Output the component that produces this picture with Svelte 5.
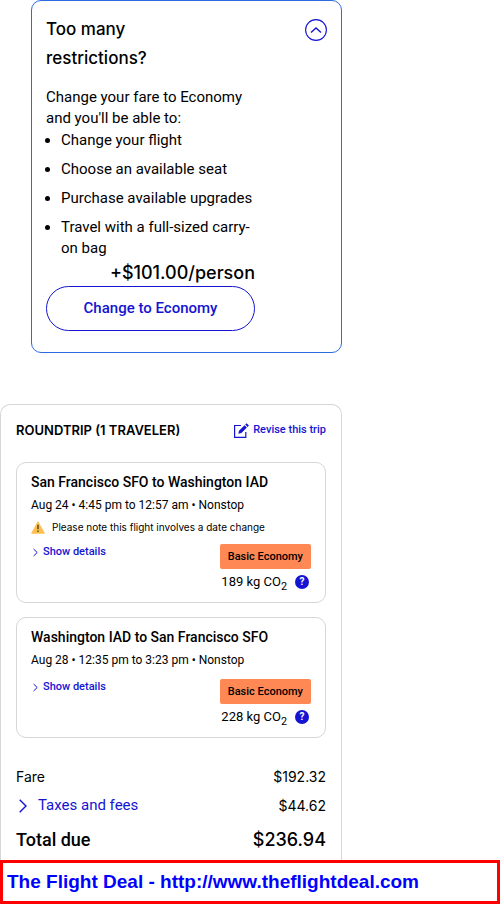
<script>
  const benefits = [
    'Change your flight',
    'Choose an available seat',
    'Purchase available upgrades',
    'Travel with a full-sized carry-on bag'
  ];
  const flights = [
    {
      route: 'San Francisco SFO to Washington IAD',
      times: 'Aug 24 • 4:45 pm to 12:57 am • Nonstop',
      note: 'Please note this flight involves a date change',
      co2: '189 kg CO'
    },
    {
      route: 'Washington IAD to San Francisco SFO',
      times: 'Aug 28 • 12:35 pm to 3:23 pm • Nonstop',
      note: '',
      co2: '228 kg CO'
    }
  ];
</script>

<main>
  <div class="column">
    <section class="upsell">
      <header>
        <h2>Too many restrictions?</h2>
        <button class="collapse" aria-label="Collapse">
          <svg width="22" height="22" viewBox="0 0 22 22" fill="none" stroke="#1414d2">
            <circle cx="11" cy="11" r="10.4" stroke-width="1.1" />
            <path d="M6 13.5 11 9l5 4.5" stroke-width="1.4" />
          </svg>
        </button>
      </header>
      <div class="offer">
        <p>Change your fare to Economy and you'll be able to:</p>
        <ul>
          {#each benefits as benefit}
            <li>{benefit}</li>
          {/each}
        </ul>
        <div class="price">+$101.00/person</div>
        <button class="change">Change to Economy</button>
      </div>
    </section>

    <section class="trip">
      <header>
        <h3>ROUNDTRIP (1 TRAVELER)</h3>
        <a class="revise" href="#revise">
          <svg width="15" height="15" viewBox="0 0 15 15">
            <path d="M7 2.5H.6v11.9h11.2V9" fill="none" stroke="#1414d2" stroke-width="1.2" />
            <path d="M4.3 10.8l.7-3.1 5.5-5.5 2.4 2.4-5.5 5.5zM11.2 1.5 12.6.2l2.3 2.3-1.3 1.4z" fill="#1414d2" />
          </svg>
          Revise this trip
        </a>
      </header>

      {#each flights as flight}
        <article>
          <h4>{flight.route}</h4>
          <div class="times">{flight.times}</div>
          {#if flight.note}
            <div class="note">
              <svg width="14" height="13" viewBox="0 0 14 13">
                <path d="M7 .8 13.3 12.2H.7z" fill="#fdc050" stroke="#fdc050" stroke-linejoin="round" />
                <path d="M7 3.8v4.4M7 9.4v1.5" stroke="#5f4a25" stroke-width="1.5" />
              </svg>
              {flight.note}
            </div>
          {/if}
          <div class="lower" class:spaced={!flight.note}>
            <a class="details" href="#details">
              <svg width="5" height="9" viewBox="0 0 5 9" fill="none" stroke="#1414d2">
                <path d="M.6 1 4.2 4.5.6 8" />
              </svg>
              Show details
            </a>
            <div class="cabin">
              <span class="tag">Basic Economy</span>
              <div class="co2">
                <span>{flight.co2}<sub>2</sub></span>
                <button class="help" aria-label="About emissions">?</button>
              </div>
            </div>
          </div>
        </article>
      {/each}

      <dl>
        <div class="row">
          <dt>Fare</dt>
          <dd>$192.32</dd>
        </div>
        <div class="row">
          <dt>
            <a class="taxes" href="#taxes">
              <svg width="8" height="14" viewBox="0 0 8 14" fill="none" stroke="#1414d2">
                <path d="M.7.7 7 7 .7 13.3" stroke-width="1.4" />
              </svg>
              Taxes and fees
            </a>
          </dt>
          <dd>$44.62</dd>
        </div>
        <div class="row total">
          <dt>Total due</dt>
          <dd>$236.94</dd>
        </div>
      </dl>
    </section>
  </div>

  <footer>The Flight Deal - http://www.theflightdeal.com</footer>
</main>

<style>
  :global(body) {
    background: #fff;
  }
  main {
    font-family: Inter, 'Liberation Sans', sans-serif;
    color: #000;
  }
  main * {
    box-sizing: border-box;
  }
  h2, h3, h4, p, ul, dl, dd {
    margin: 0;
    padding: 0;
  }
  a {
    color: #1414d2;
    text-decoration: none;
  }
  button {
    font: inherit;
    cursor: pointer;
    padding: 0;
    border: 0;
    background: none;
  }
  svg {
    display: block;
    flex: none;
  }
  .column {
    max-width: 342px;
  }
  .upsell {
    margin-left: 31px;
    padding: 14px 14px 21px;
    border: 1px solid #2c6be0;
    border-radius: 10px;
    font-family: Roboto, 'Liberation Sans', sans-serif;
  }
  .upsell header {
    display: flex;
    justify-content: space-between;
    margin-bottom: 14px;
  }
  h2 {
    width: 120px;
    font: 500 17px/29px Inter, 'Liberation Sans', sans-serif;
  }
  .collapse {
    align-self: flex-start;
    margin-top: 4px;
  }
  .offer {
    width: 209px;
    font-size: 15px;
    line-height: 21px;
  }
  p {
    margin-bottom: 1px;
  }
  ul {
    padding-left: 15px;
    display: grid;
    gap: 8px;
  }
  .price {
    font: 500 18px/27px Inter, 'Liberation Sans', sans-serif;
    text-align: right;
  }
  .change {
    width: 100%;
    height: 45px;
    border: 1px solid #1414d2;
    border-radius: 23px;
    color: #1414d2;
    font-weight: 500;
  }
  .trip {
    margin-top: 51px;
    padding: 15px 15px 0;
    border: 1px solid #d6d6d6;
    border-bottom: 0;
    border-radius: 10px 10px 0 0;
  }
  .trip header {
    display: flex;
    justify-content: space-between;
    align-items: center;
    height: 20px;
    margin-bottom: 22px;
  }
  h3 {
    font-size: 13px;
    font-weight: 600;
    line-height: 18px;
  }
  .revise {
    display: flex;
    align-items: center;
    gap: 4px;
    font: 500 11px/18px Roboto, 'Liberation Sans', sans-serif;
  }
  article {
    margin-bottom: 14px;
    padding: 8px 14px;
    border: 1px solid #d6d6d6;
    border-radius: 10px;
    font-family: Roboto, 'Liberation Sans', sans-serif;
  }
  h4 {
    font-size: 14px;
    font-weight: 500;
    line-height: 23px;
  }
  .times {
    font-size: 12px;
    line-height: 22px;
  }
  .note {
    display: flex;
    align-items: center;
    gap: 7px;
    font-family: Inter, 'Liberation Sans', sans-serif;
    font-size: 10px;
    line-height: 22px;
  }
  .lower {
    display: flex;
    justify-content: space-between;
    align-items: flex-start;
    padding-top: 6px;
  }
  .spaced {
    padding-top: 8px;
  }
  .details {
    display: flex;
    align-items: center;
    gap: 5px;
    padding-left: 2px;
    font-size: 11px;
    font-weight: 500;
    line-height: 16px;
  }
  .cabin {
    display: flex;
    flex-direction: column;
    align-items: flex-end;
  }
  .tag {
    padding: 0 8px;
    border-radius: 2px;
    background: #ff8855;
    font-size: 11px;
    font-weight: 500;
    line-height: 25px;
  }
  .co2 {
    display: flex;
    align-items: center;
    gap: 8px;
    padding-right: 2px;
    font-size: 13px;
    line-height: 25px;
  }
  sub {
    line-height: 1px;
  }
  .help {
    width: 14px;
    height: 14px;
    border-radius: 50%;
    background: #1414d2;
    color: #fff;
    font-size: 10px;
    font-weight: 700;
    line-height: 14px;
  }
  dl {
    padding-top: 10px;
    font-size: 14px;
    line-height: 29px;
  }
  .row {
    display: flex;
    justify-content: space-between;
  }
  .taxes {
    display: flex;
    align-items: center;
    gap: 11px;
    padding-left: 3px;
    font-family: Roboto, 'Liberation Sans', sans-serif;
    font-size: 15px;
  }
  .total {
    font-size: 18px;
    font-weight: 500;
    line-height: 40px;
  }
  .total dt {
    font-family: Roboto, 'Liberation Sans', sans-serif;
  }
  footer {
    padding: 0 4px;
    border: 3px solid #f00;
    background: #fff;
    color: #00f;
    font: 700 19px/38px 'Liberation Sans', Arial, sans-serif;
    white-space: nowrap;
  }
</style>
